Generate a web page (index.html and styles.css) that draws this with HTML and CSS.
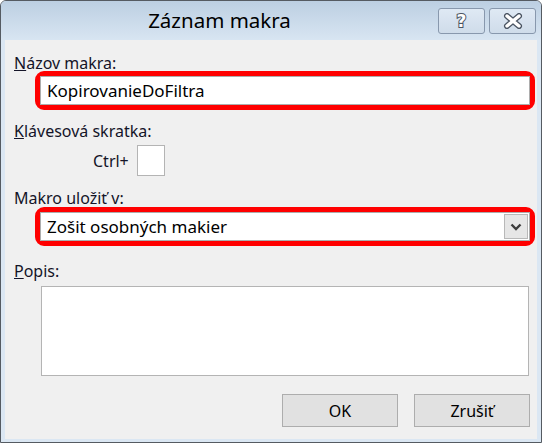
FILE: index.html
```html
<!DOCTYPE html>
<html lang="sk">
<head>
    <meta charset="UTF-8">
    <title>Záznam makra</title>
    <link rel="stylesheet" href="styles.css">
</head>
<body>

    <div class="window">
        <div class="titlebar">
            <div class="title">Záznam makra</div>
            <div class="caption-buttons">
                <div class="cap-btn"><span class="help-glyph">?</span></div>
                <div class="cap-btn">
                    <svg width="22" height="16" viewBox="0 0 22 16">
                        <path d="M5 3 L17 13 M17 3 L5 13" stroke="#4b5563" stroke-width="6" stroke-linecap="round"/>
                        <path d="M5 3 L17 13 M17 3 L5 13" stroke="#ffffff" stroke-width="3.4" stroke-linecap="round"/>
                    </svg>
                </div>
            </div>
        </div>

        <div class="content">
            <div class="field-label label-name"><u>N</u>ázov makra:</div>
            <div class="highlight">
                <div class="textbox">KopirovanieDoFiltra</div>
            </div>

            <div class="field-label label-shortcut"><u>K</u>lávesová skratka:</div>
            <div class="shortcut-row">
                <span class="ctrl-text">Ctrl+</span>
                <div class="key-box"></div>
            </div>

            <div class="field-label label-store">Makro uložiť v:</div>
            <div class="highlight">
                <div class="textbox select-box">
                    <span>Zošit osobných makier</span>
                    <div class="drop-btn">
                        <svg width="12" height="8" viewBox="0 0 12 8">
                            <path d="M1.5 1.5 L6 6 L10.5 1.5" fill="none" stroke="#3c3c3c" stroke-width="2.4"/>
                        </svg>
                    </div>
                </div>
            </div>

            <div class="field-label label-desc"><u>P</u>opis:</div>
            <div class="description"></div>

            <div class="button-row">
                <div class="btn">OK</div>
                <div class="btn">Zrušiť</div>
            </div>
        </div>
    </div>

</body>
</html>
```

FILE: styles.css
```css
body {
    margin: 0;
    background-color: #ffffff;
    font-family: "Noto Sans", "Open Sans", sans-serif;
    color: #1a1a1a;
}

.window {
    width: 542px;
    height: 443px;
    box-sizing: border-box;
    border: 1px solid #555b62;
    border-radius: 6px 6px 0 0;
    background-color: #dbe7f3; /* ramik okna */
    display: flex;
    flex-direction: column;
    overflow: hidden;
}

.titlebar {
    height: 39px;
    display: flex;
    align-items: flex-start;
    background: linear-gradient(#bccfe2, #d8e5f2);
}

.title {
    flex: 1;
    text-align: center;
    font-size: 20.5px;
    line-height: 38px;
    color: #000000;
}

.caption-buttons {
    display: flex;
    gap: 4px;
    margin-top: 7px;
    margin-right: 5px;
}

.cap-btn {
    width: 47px;
    height: 26px;
    box-sizing: border-box;
    border: 1px solid #8898ad;
    border-radius: 3px;
    background: linear-gradient(#dfe9f4, #cfdcea);
    display: flex;
    align-items: center;
    justify-content: center;
}

.help-glyph {
    font-family: "DejaVu Sans", sans-serif;
    font-weight: bold;
    font-size: 17px;
    color: #ffffff;
    -webkit-text-stroke: 2px #4b5563;
    paint-order: stroke fill;
    line-height: 20px;
}

.content {
    flex: 1;
    margin: 0 4px 3px 4px;
    background-color: #f0f0f0;
    padding: 0 2px 0 9px;
}

.field-label {
    font-size: 16px;
    line-height: 15px;
    color: #141428;
}

.label-name {
    margin-top: 16px;
}

.label-shortcut {
    margin-top: 14px;
}

.label-store {
    margin-top: 15px;
}

.label-desc {
    margin-top: 18px;
}

.highlight {
    margin-left: 21px;
    border: 5px solid #ff0000;
    border-radius: 9px;
    height: 29px;
}

.label-store + .highlight {
    margin-top: 1px;
}

.textbox {
    height: 29px;
    box-sizing: border-box;
    border: 1px solid #adadad;
    background-color: #ffffff;
    padding-left: 6px;
    font-size: 17px;
    line-height: 27px;
    color: #000000;
}

.select-box {
    display: flex;
    justify-content: space-between;
    align-items: center;
    padding-right: 1px;
}

.drop-btn {
    width: 24px;
    height: 25px;
    box-sizing: border-box;
    border: 1px solid #b8b8b8;
    background-color: #e6e6e6;
    display: flex;
    align-items: center;
    justify-content: center;
}

.shortcut-row {
    display: flex;
    align-items: center;
    margin-top: 6px;
    margin-left: 79px;
    gap: 8px;
}

.ctrl-text {
    font-size: 16px;
    color: #141428;
}

.key-box {
    width: 28px;
    height: 31px;
    box-sizing: border-box;
    border: 1px solid #b4b4b4;
    background-color: #ffffff;
}

.description {
    margin-top: 7px;
    margin-left: 27px;
    margin-right: 6px;
    height: 90px;
    box-sizing: border-box;
    border: 1px solid #b4b4b4;
    background-color: #ffffff;
}

.button-row {
    display: flex;
    justify-content: flex-end;
    gap: 16px;
    margin-top: 18px;
    margin-right: 5px;
}

.btn {
    width: 116px;
    height: 33px;
    box-sizing: border-box;
    border: 1px solid #adadad;
    background-color: #e1e1e1;
    display: flex;
    align-items: center;
    justify-content: center;
    font-size: 16px;
    color: #000000;
}
```
